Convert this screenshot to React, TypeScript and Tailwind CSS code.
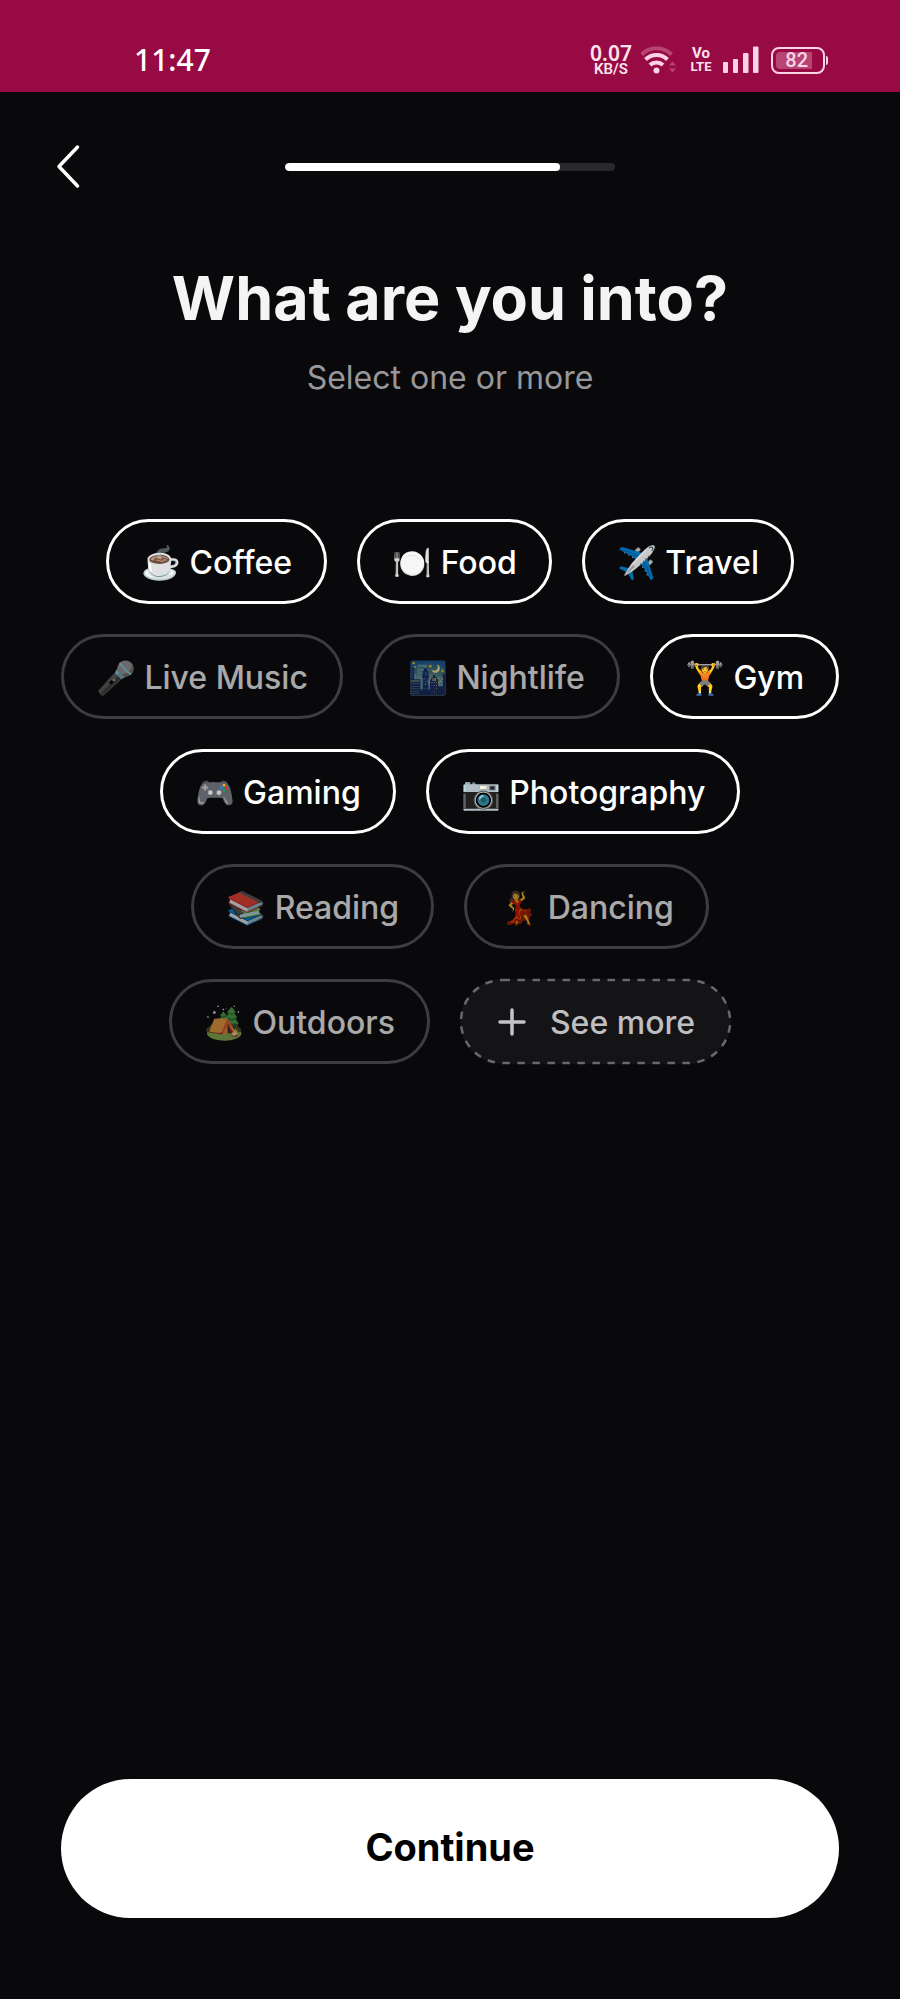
import React, { useState } from "react";

type Interest = { emoji: string; label: string; selected: boolean };

const initialInterests: Interest[] = [
  { emoji: "☕", label: "Coffee", selected: true },
  { emoji: "🍽️", label: "Food", selected: true },
  { emoji: "✈️", label: "Travel", selected: true },
  { emoji: "🎤", label: "Live Music", selected: false },
  { emoji: "🌃", label: "Nightlife", selected: false },
  { emoji: "🏋️", label: "Gym", selected: true },
  { emoji: "🎮", label: "Gaming", selected: true },
  { emoji: "📷", label: "Photography", selected: true },
  { emoji: "📚", label: "Reading", selected: false },
  { emoji: "💃", label: "Dancing", selected: false },
  { emoji: "🏕️", label: "Outdoors", selected: false },
];

function StatusBar() {
  return (
    <div className="flex h-[92px] items-center justify-between bg-[#970a44] pr-[72px] pl-[134px] pt-7 font-['Noto_Sans',sans-serif] text-[#fde3ee]">
      <span className="text-[30px] leading-8 font-medium text-white">11:47</span>
      <div className="flex items-center">
        <div className="flex w-11 flex-col items-center font-semibold">
          <span className="text-[21px] leading-[18px]">0.07</span>
          <span className="font-['Roboto',sans-serif] text-[15px] leading-[15px]">KB/S</span>
        </div>
        <svg className="ml-2 h-8 w-[38px]" viewBox="0 0 38 32" fill="none" strokeLinecap="butt">
          <path d="M0.500 10.500a21 21 0 0 1 30 0" stroke="#b84474" strokeWidth="4" />
          <path d="M4.500 15.500a15.500 15.500 0 0 1 22 0" stroke="#fbd3e4" strokeWidth="4" />
          <path d="M9 21a9.500 9.500 0 0 1 13 0" stroke="#fbd3e4" strokeWidth="4" />
          <circle cx="15.500" cy="26.500" r="3" fill="#fbd3e4" />
          <path d="m28 21.500 3.500-4 3.500 4zM28 24.500l3.500 4 3.500-4z" fill="#b84474" />
        </svg>
        <div className="ml-2.5 flex w-6 flex-col items-center font-['Roboto',sans-serif] font-bold">
          <span className="text-[15px] leading-[13px]">Vo</span>
          <span className="text-[13px] leading-[13px]">LTE</span>
        </div>
        <svg className="ml-2.5 h-8 w-9" viewBox="0 0 36 32" fill="#fbd3e4">
          <rect x="0" y="18" width="5" height="11" rx="1" />
          <rect x="10" y="15" width="5" height="14" rx="1" />
          <rect x="20" y="9" width="5.500" height="20" rx="1" />
          <rect x="30" y="2.500" width="5.500" height="26.500" rx="1" />
        </svg>
        <div className="ml-3 flex items-center gap-px">
          <div className="flex h-[27px] w-[54px] rounded-lg border-2 border-[#fbd3e4] p-[3px]">
            <div className="flex h-full w-9 items-center justify-end rounded-l-sm bg-[#b84474] pr-1">
              <span className="font-['Roboto',sans-serif] text-[20px] leading-5 font-medium text-[#fbd3e4]">82</span>
            </div>
          </div>
          <div className="h-[9px] w-[2px] rounded-r bg-[#fbd3e4]" />
        </div>
      </div>
    </div>
  );
}

export default function App() {
  const [interests, setInterests] = useState(initialInterests);

  const toggle = (label: string) =>
    setInterests((list) =>
      list.map((item) => (item.label === label ? { ...item, selected: !item.selected } : item)),
    );

  return (
    <div className="flex min-h-screen flex-col bg-[#09090b] font-['Inter',sans-serif] text-white">
      <StatusBar />

      <header className="grid h-[150px] grid-cols-[1fr_330px_1fr] items-center px-12">
        <button type="button" aria-label="Back" className="flex h-16 w-10 items-center justify-center">
          <svg className="h-12 w-7" viewBox="0 0 28 48" fill="none" stroke="#fff" strokeWidth="3.500" strokeLinecap="round" strokeLinejoin="round">
            <path d="M23.500 4 5 23.500l18.500 19.500" />
          </svg>
        </button>
        <div role="progressbar" aria-label="Progress" aria-valuenow={5} aria-valuemax={6} className="h-2 overflow-hidden rounded-full bg-[#29292b]">
          <div className="h-full w-5/6 rounded-full bg-white" />
        </div>
      </header>

      <main className="flex flex-1 flex-col items-center pt-5">
        <h1 className="text-[61px] leading-[72px] font-bold text-[#f4f4f5]">What are you into?</h1>
        <p className="mt-6 text-[32px] leading-10 text-[#98989b]">Select one or more</p>

        <div className="mt-[121px] flex flex-wrap justify-center gap-[30px] px-[50px]">
          {interests.map(({ emoji, label, selected }) => (
            <button
              key={label}
              type="button"
              aria-pressed={selected}
              onClick={() => toggle(label)}
              className={`flex h-[85px] items-center rounded-full border-[3px] px-8 pt-0.5 text-[32px] leading-10 font-medium ${
                selected ? "border-white" : "border-[#3d3d40]"
              }`}
            >
              <span className={`whitespace-pre ${selected ? "" : "opacity-65"}`}>
                {emoji} {label}
              </span>
            </button>
          ))}
          <button
            type="button"
            className="relative flex h-[85px] items-center gap-[22px] rounded-full bg-[#141416] pr-9 pl-9 text-[32px] leading-10 font-medium text-[#bfbfc1]"
          >
            <svg className="absolute inset-0 h-full w-full overflow-visible p-px" fill="none" aria-hidden="true">
              <rect width="100%" height="100%" rx="41.500" stroke="#69696c" strokeWidth="2.500" strokeDasharray="7.500 7.500" />
            </svg>
            <svg className="h-8 w-8" viewBox="0 0 32 32" stroke="#c4c4c6" strokeWidth="3.500" strokeLinecap="round" aria-hidden="true">
              <path d="M16 4v24M4 16h24" />
            </svg>
            <span className="pt-0.5">See more</span>
          </button>
        </div>
      </main>

      <footer className="px-[61px] pb-[81px]">
        <button type="button" className="h-[139px] w-full rounded-full bg-white pb-1 text-[38px] leading-[48px] font-bold text-black">
          Continue
        </button>
      </footer>
    </div>
  );
}
